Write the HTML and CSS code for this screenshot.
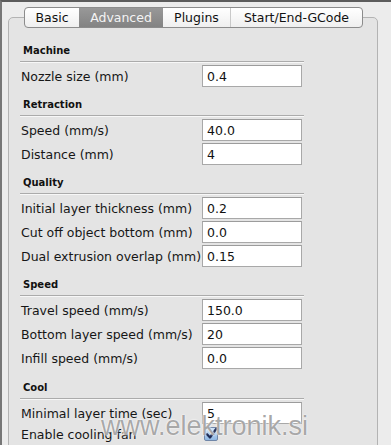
FILE: index.html
```html
<!DOCTYPE html>
<html>
<head>
<meta charset="utf-8">
<link rel="stylesheet" href="styles.css">
</head>
<body>
<div class="window">
  <div class="tabs">
    <span class="tab t-basic">Basic</span>
    <span class="tab t-adv selected">Advanced</span>
    <span class="tab t-plug">Plugins</span>
    <span class="tab t-gcode">Start/End-GCode</span>
  </div>
  <div class="panel">
    <div class="form">
      <div class="section-title first">Machine</div>
      <div class="rows">
        <div class="row"><span class="label">Nozzle size (mm)</span><input class="field" type="text" value="0.4"></div>
      </div>

      <div class="section-title">Retraction</div>
      <div class="rows">
        <div class="row"><span class="label">Speed (mm/s)</span><input class="field" type="text" value="40.0"></div>
        <div class="row"><span class="label">Distance (mm)</span><input class="field" type="text" value="4"></div>
      </div>

      <div class="section-title">Quality</div>
      <div class="rows">
        <div class="row"><span class="label">Initial layer thickness (mm)</span><input class="field" type="text" value="0.2"></div>
        <div class="row"><span class="label">Cut off object bottom (mm)</span><input class="field" type="text" value="0.0"></div>
        <div class="row"><span class="label">Dual extrusion overlap (mm)</span><input class="field" type="text" value="0.15"></div>
      </div>

      <div class="section-title">Speed</div>
      <div class="rows">
        <div class="row"><span class="label">Travel speed (mm/s)</span><input class="field" type="text" value="150.0"></div>
        <div class="row"><span class="label">Bottom layer speed (mm/s)</span><input class="field" type="text" value="20"></div>
        <div class="row"><span class="label">Infill speed (mm/s)</span><input class="field" type="text" value="0.0"></div>
      </div>

      <div class="section-title cool">Cool</div>
      <div class="rows">
        <div class="row"><span class="label">Minimal layer time (sec)</span><input class="field" type="text" value="5"></div>
        <div class="row check-row"><span class="label">Enable cooling fan</span>
          <span class="checkbox"><svg width="14" height="14" viewBox="0 0 14 14"><path d="M3 7.2 L6 10.5 L12.5 1.5" fill="none" stroke="#1d2a55" stroke-width="2.2" stroke-linecap="round" stroke-linejoin="round"/></svg></span>
        </div>
      </div>
    </div>
  </div>
  <div class="watermark">www.elektronik.si</div>
</div>
</body>
</html>
```

FILE: styles.css
```css
html, body {
  margin: 0;
  padding: 0;
  background: #ececec;
}

body {
  width: 391px;
  height: 445px;
  overflow: hidden;
  font-family: "DejaVu Sans", "Liberation Sans", sans-serif;
  font-size: 12.5px;
  color: #161616;
}

.window {
  position: relative;
  height: 443px;
  overflow: hidden;
  border-top: 2px solid #5c5c5c;
  border-left: 2px solid #777;
  background: #ececec;
}

.tabs {
  display: flex;
  width: max-content;
  margin: 5px 0 -11px 22px;
  position: relative;
  z-index: 1;
  border: 1px solid #8c8c8c;
  border-radius: 4px;
  overflow: hidden;
  background: linear-gradient(#ffffff, #efefef);
}

.tab {
  display: block;
  height: 19px;
  line-height: 19px;
  text-align: center;
  font-size: 12.5px;
  color: #111;
}

.t-basic { width: 54px; }
.t-adv { width: 84px; }
.t-plug { width: 67px; border-right: 1px solid #c9c9c9; }
.t-gcode { width: 131px; }

.tab.selected {
  background: linear-gradient(#989898, #838383);
  color: #f4f4f4;
}

.panel {
  margin-left: 6px;
  width: 368px;
  height: 440px;
  border: 1px solid #b3b3b3;
  border-radius: 5px;
  background: #e4e4e4;
}

.form {
  width: 284px;
  margin-left: 11px;
}

.section-title {
  font-weight: bold;
  font-size: 10px;
  line-height: 14px;
  padding: 11px 0 3px 3px;
  border-bottom: 1px solid #ababab;
  box-shadow: 0 1px 0 #f7f7f7;
  color: #111;
}

.section-title.first {
  padding-top: 26px;
}

.section-title.cool {
  padding-top: 12px;
}

.rows {
  display: flex;
  flex-direction: column;
  gap: 2px;
  margin-top: 3px;
}

.row {
  display: grid;
  grid-template-columns: 182px 100px;
  align-items: center;
  height: 22px;
}

.label {
  padding-left: 1px;
  white-space: nowrap;
}

.field {
  box-sizing: border-box;
  width: 100px;
  height: 22px;
  margin: 0;
  padding: 0 4px;
  border: 1px solid #a8a8a8;
  border-top-color: #9c9c9c;
  background: #fff;
  font-family: "DejaVu Sans", "Liberation Sans", sans-serif;
  font-size: 12.5px;
  color: #111;
  outline: none;
}

.check-row {
  height: 16px;
}

.checkbox {
  display: block;
  width: 14px;
  height: 14px;
  margin-left: 2px;
  box-sizing: border-box;
  border: 1px solid #6f86a8;
  border-radius: 2px;
  background: linear-gradient(#cfe2f6, #8fb7e3);
}

.checkbox svg {
  display: block;
  margin: -1px 0 0 -1px;
}

.watermark {
  position: absolute;
  left: 99px;
  top: 411px;
  font-family: "Liberation Sans", Arial, sans-serif;
  font-size: 27px;
  line-height: 27px;
  color: rgba(140, 140, 140, 0.75);
  text-shadow: 0 0 2px #ffffff, 0 0 1px #ffffff;
  white-space: nowrap;
  pointer-events: none;
}
```
